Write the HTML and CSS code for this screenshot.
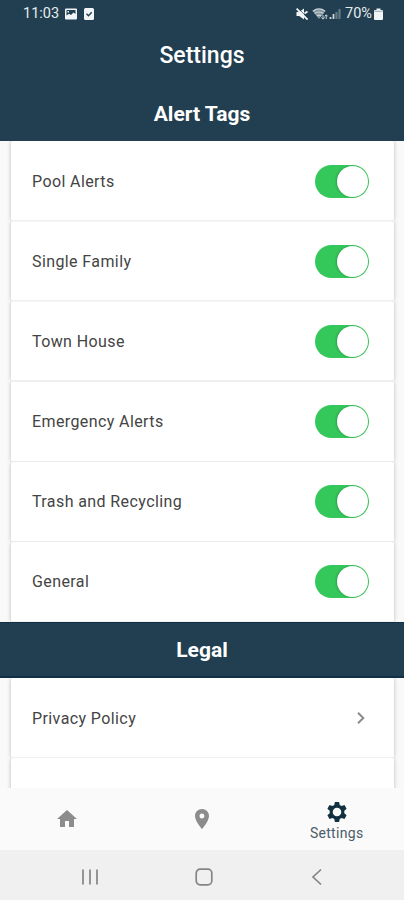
FILE: index.html
```html
<!DOCTYPE html>
<html lang="en">
<head>
    <meta charset="UTF-8">
    <meta name="viewport" content="width=device-width, initial-scale=1.0">
    <title>Settings</title>
    <link rel="stylesheet" href="styles.css">
</head>
<body>
    <header>
        <div class="status-bar">
            <span class="time">11:03</span>
            <svg class="picture" width="12" height="12" viewBox="0 0 12 12">
                <path fill="#f2f5f7" fill-rule="evenodd" d="M1 0.5h10q1 0 1 1v9q0 1-1 1h-10q-1 0-1-1v-9q0-1 1-1zM1.5 7.5V2h9v4L8.5 4.5 6 7 4 5.8zM2.5 3v1.5H4V3z"/>
            </svg>
            <svg class="check" width="10" height="12" viewBox="0 0 10 12">
                <rect width="10" height="12" rx="1.5" fill="#f2f5f7"/>
                <path d="M2.5 5.8l2 2 3.2-3.6" fill="none" stroke="#213f50" stroke-width="1.4"/>
            </svg>
            <div class="status-right">
                <svg class="mute" width="12" height="12" viewBox="0 0 12 12">
                    <path fill="#f2f5f7" d="M0.5 4h2.7L8 0.5v11L3.2 8H0.5z"/>
                    <path d="M1.8 0l10 10" stroke="#213f50" stroke-width="0.8"/>
                    <path d="M0.6 0.6l11 11M8.5 5.5l3-2" stroke="#f2f5f7" stroke-width="1.8"/>
                </svg>
                <svg class="wifi" width="16" height="12" viewBox="0 0 16 12">
                    <path d="M0.8 3.2Q7 -1.4 13.2 3.2L7 11z" fill="#8496a0"/>
                    <path d="M0.8 3.2Q7 -1.4 13.2 3.2M2.7 5.6Q7 2.4 11.3 5.6M4.8 8Q7 6.4 9.2 8" fill="none" stroke="#ced6da" stroke-width="1.2"/>
                    <path d="M11 7v4M9.5 9.5l1.5 1.7 1.5-1.7M14.2 11V7M12.8 8.4l1.4-1.6 1.4 1.6" fill="none" stroke="#ced6da"/>
                </svg>
                <svg class="signal" width="12" height="12" viewBox="0 0 12 12">
                    <path d="M1.5 11V9M4.5 11V6" stroke="#ced6da" stroke-width="1.8"/>
                    <path d="M7.5 11V4M10.5 11V1" stroke="#647b87" stroke-width="2.2"/>
                </svg>
                <span class="percent">70%</span>
                <svg class="battery" width="9" height="12" viewBox="0 0 9 12">
                    <path fill="#f2f5f7" d="M2.5 0.5h4V2H8q1 0 1 1v8q0 1-1 1H1q-1 0-1-1V3q0-1 1-1h1.5z"/>
                    <path d="M0.5 3.3h8" stroke="#9aa9b1"/>
                </svg>
            </div>
        </div>
        <h1>Settings</h1>
    </header>

    <main>
        <h2 class="alert-title">Alert Tags</h2>
        <section class="list">
            <label class="row">Pool Alerts <input type="checkbox" class="switch" checked></label>
            <label class="row">Single Family <input type="checkbox" class="switch" checked></label>
            <label class="row">Town House <input type="checkbox" class="switch" checked></label>
            <label class="row">Emergency Alerts <input type="checkbox" class="switch" checked></label>
            <label class="row">Trash and Recycling <input type="checkbox" class="switch" checked></label>
            <label class="row">General <input type="checkbox" class="switch" checked></label>
        </section>

        <h2 class="legal-title">Legal</h2>
        <section class="list">
            <a class="row">Privacy Policy
                <svg class="chevron" width="10" height="14" viewBox="0 0 10 14">
                    <path d="M2 1.8L7.3 7 2 12.2" fill="none" stroke="#8b8b8b" stroke-width="2"/>
                </svg>
            </a>
            <div class="row"></div>
        </section>
    </main>

    <nav class="tabs">
        <a class="tab">
            <svg width="24" height="24" viewBox="0 0 24 24">
                <path fill="#8c8c8c" d="M10 20v-6h4v6h5v-8h3L12 3 2 12h3v8z"/>
            </svg>
        </a>
        <a class="tab">
            <svg width="24" height="24" viewBox="0 0 24 24">
                <path fill="#8c8c8c" d="M12 2C8.13 2 5 5.13 5 9c0 5.25 7 13 7 13s7-7.75 7-13c0-3.87-3.13-7-7-7zm0 9.5a2.5 2.5 0 1 1 0-5 2.5 2.5 0 0 1 0 5z"/>
            </svg>
        </a>
        <a class="tab active">
            <svg width="24" height="24" viewBox="0 0 24 24">
                <path fill="#12303f" fill-rule="evenodd" d="M9.9 2h4.2l.6 3 1.9 1.1 2.9-1 2.1 3.7-2.3 2v2.4l2.3 2-2.1 3.7-2.9-1-1.9 1.1-.6 3H9.900l-.6-3-1.9-1.1-2.900 1-2.1-3.7 2.3-2v-2.4l-2.3-2 2.1-3.7 2.9 1L9.3 5zM12 7.700a4.3 4.3 0 1 0 0 8.6 4.3 4.3 0 0 0 0-8.6z"/>
            </svg>
            <span>Settings</span>
        </a>
    </nav>

    <footer>
        <svg width="18" height="18" viewBox="0 0 18 18">
            <path d="M2 1.5v15M9 1.5v15M16 1.5v15" stroke="#8a8a8a" stroke-width="1.8"/>
        </svg>
        <svg width="18" height="18" viewBox="0 0 18 18">
            <rect x="1.2" y="1.2" width="15.6" height="15.6" rx="4" fill="none" stroke="#858585" stroke-width="1.7"/>
        </svg>
        <svg width="18" height="18" viewBox="0 0 18 18">
            <path d="M13 1.5L5 9l8 7.5" fill="none" stroke="#858585" stroke-width="1.7"/>
        </svg>
    </footer>
</body>
</html>
```
FILE: styles.css
```css
* {
    box-sizing: border-box;
}

body {
    font-family: Roboto, Arial, sans-serif;
    background-color: #f9f9f9;
    color: #444;
    margin: 0;
    height: 900px;
    display: flex;
    flex-direction: column;
    overflow: hidden;
}

header {
    background-color: #213f50;
    color: white;
    height: 86px;
    flex: none;
}

.status-bar {
    display: flex;
    align-items: center;
    height: 27px;
    padding: 0 21px 0 23px;
    font-size: 14.5px;
    line-height: 27px;
    color: #e6ebee;
}

.time {
    width: 42px;
}

.check {
    margin-left: 7px;
}

.status-right {
    display: flex;
    align-items: center;
    margin-left: auto;
}

.wifi {
    margin-left: 4px;
}

.signal {
    margin: 0 4px 0 1px;
}

.percent {
    width: 29px;
}

h1 {
    margin: 0;
    font-size: 23px;
    font-weight: 500;
    line-height: 58px;
    text-align: center;
}

main {
    flex: 1;
    min-height: 0;
    overflow: hidden;
}

h2 {
    margin: 0;
    background-color: #213f50;
    color: white;
    font-size: 21px;
    font-weight: 700;
    text-align: center;
    position: relative;
}

.alert-title {
    height: 55px;
    line-height: 56px;
}

.legal-title {
    height: 56px;
    line-height: 54px;
    border-top: 1px solid #0f3047;
    border-bottom: 2px solid #0f3047;
}

.list {
    margin: 0 10px 0 11px;
}

.row {
    display: flex;
    align-items: center;
    justify-content: space-between;
    height: 80.17px;
    padding: 1px 25px 0 21px;
    background-color: white;
    border-bottom: 1px solid #f0f0f0;
    border-radius: 2px;
    box-shadow: 0 0 4px rgba(0, 0, 0, 0.25);
    clip-path: inset(0 -6px);
    font-size: 16px;
    letter-spacing: 0.4px;
}

.switch {
    appearance: none;
    width: 54px;
    height: 33px;
    margin: 0;
    padding: 1px;
    border-radius: 17px;
    background-color: #34c759;
}

.switch::before {
    content: "";
    display: block;
    width: 31px;
    height: 31px;
    margin-left: auto;
    border-radius: 50%;
    background-color: white;
    box-shadow: -1px 0 2px rgba(0, 0, 0, 0.2);
}

.chevron {
    margin-right: 3px;
}

.tabs {
    display: flex;
    flex: none;
    height: 62px;
    background-color: #fafafa;
}

.tab {
    flex: 1;
    display: flex;
    flex-direction: column;
    align-items: center;
    justify-content: center;
}

.active {
    padding-top: 3px;
    color: #4b5d67;
    font-size: 14px;
    line-height: 18px;
    letter-spacing: 0.3px;
}

footer {
    display: flex;
    align-items: center;
    justify-content: space-between;
    flex: none;
    height: 50px;
    padding: 3px 78px 0 81px;
    background-color: #f0f0f0;
}
```
